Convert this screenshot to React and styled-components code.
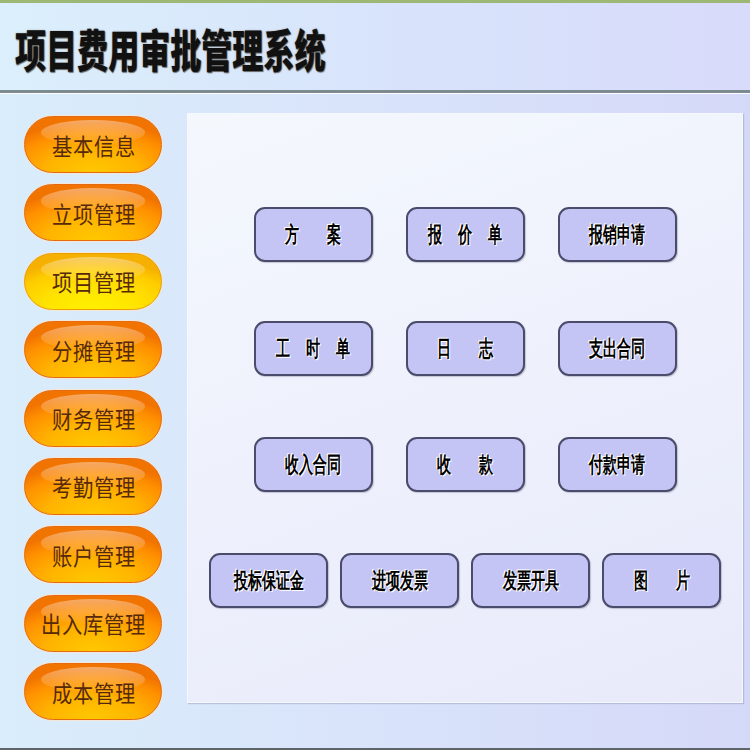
import React from "react";
import styled, { createGlobalStyle, css } from "styled-components";

const GlobalStyle = createGlobalStyle`
  html, body {
    margin: 0;
    padding: 0;
  }
  body {
    font-family: "Noto Sans CJK SC", "Noto Sans", sans-serif;
  }
`;

const Page = styled.div`
  width: 750px;
  height: 750px;
  display: flex;
  flex-direction: column;
  overflow: hidden;
  background: linear-gradient(to right, #d9edfb 0%, #d9e4fa 45%, #d5d9f8 100%);
  border-top: 3px solid #9cb874;
  box-sizing: border-box;
`;

const Header = styled.div`
  height: 90px;
  display: flex;
  align-items: center;
  padding: 4px 0 0 15px;
  box-sizing: border-box;
  background: linear-gradient(to right, #dbeffc 0%, #d8e4fb 50%, #d8dbfa 100%);
  border-bottom: 3px solid #7d8a8f;
  box-shadow: 0 1px 0 #ffffff;
`;

const Title = styled.h1`
  margin: 0;
  display: inline-block;
  font-size: 45px;
  font-weight: 800;
  color: #111;
  white-space: nowrap;
  letter-spacing: 0;
  transform: scaleX(0.69);
  transform-origin: left center;
  text-shadow: 1px 1px 1px #666, 0 0 2px #999;
`;

const Body = styled.div`
  flex: 1;
  display: flex;
  padding: 20px 0 0 24px;
  box-sizing: border-box;
  border-bottom: 2px solid #5e6468;
`;

const Sidebar = styled.nav`
  width: 138px;
  display: flex;
  flex-direction: column;
  gap: 11.4px;
  padding-top: 3px;
`;

const Pill = styled.div`
  position: relative;
  height: 57px;
  border-radius: 29px;
  display: flex;
  align-items: center;
  justify-content: center;
  box-sizing: border-box;
  border: 1px solid #e56a10;
  box-shadow: 0 0 0 1px rgba(255, 230, 200, 0.7);
  background: radial-gradient(
    ellipse 75% 90% at 50% 100%,
    #ffc800 0%,
    #ffb400 45%,
    #ff9000 80%,
    #f27400 100%
  );
  ${(p) =>
    p.$active &&
    css`
      border-color: #eaa000;
      background: radial-gradient(
        ellipse 75% 90% at 50% 100%,
        #fff000 0%,
        #ffe400 45%,
        #ffcc00 80%,
        #f6b000 100%
      );
    `}

  &::before {
    content: "";
    position: absolute;
    top: 3px;
    left: 12%;
    width: 76%;
    height: 46%;
    border-radius: 50%;
    background: linear-gradient(
      to bottom,
      rgba(255, 255, 255, 0.4),
      rgba(255, 255, 255, 0.03)
    );
  }
`;

const PillText = styled.span`
  position: relative;
  display: flex;
  gap: 1px;
  color: #55290a;
  font-size: 23px;
`;

const Char = styled.span`
  display: inline-block;
  width: ${(p) => p.$w}px;
  overflow: visible;
  white-space: nowrap;
  transform: scaleX(${(p) => p.$sx});
  transform-origin: left center;
`;

const Panel = styled.main`
  width: 556px;
  height: 590px;
  margin-left: 25px;
  box-sizing: border-box;
  background: linear-gradient(160deg, #f4f8fd 0%, #eef1fc 50%, #e8eafa 100%);
  border: 1px solid #f6f8ff;
  box-shadow: 1px 1px 1px rgba(120, 130, 170, 0.35);
  display: flex;
  flex-direction: column;
  padding-top: 93px;
`;

const Row = styled.div`
  display: flex;
  justify-content: center;
  gap: ${(p) => p.$gap}px;
  margin-bottom: ${(p) => p.$mb}px;
`;

const ActionButton = styled.button`
  width: 119px;
  height: 55px;
  border-radius: 11px;
  border: 2px solid #4b4b6c;
  background: #c5c5f5;
  display: flex;
  align-items: center;
  justify-content: center;
  padding: 0;
  cursor: pointer;
  box-shadow: 1px 1px 1px rgba(60, 60, 90, 0.25);
`;

const ActionText = styled.span`
  display: flex;
  gap: ${(p) => p.$gap}px;
  color: #000;
  font-size: 22px;
  font-weight: 700;
  text-shadow: 0 0 2px #fff, 1px 1px 0 #fff, -1px -1px 0 #fff;
`;

const menus = [
  "基本信息",
  "立项管理",
  "项目管理",
  "分摊管理",
  "财务管理",
  "考勤管理",
  "账户管理",
  "出入库管理",
  "成本管理",
];

const gapFor = (label) => {
  if (label.length === 2) return 28;
  if (label.length === 3) return 16;
  return 0;
};

const rows = [
  { items: ["方案", "报价单", "报销申请"], gap: 33, mb: 59 },
  { items: ["工时单", "日志", "支出合同"], gap: 33, mb: 61 },
  { items: ["收入合同", "收款", "付款申请"], gap: 33, mb: 61 },
  { items: ["投标保证金", "进项发票", "发票开具", "图片"], gap: 12, mb: 0 },
];

const Action = ({ label }) => (
  <ActionButton>
    <ActionText $gap={gapFor(label)}>
      {label.split("").map((c, i) => (
        <Char key={i} $w={14} $sx={0.64}>
          {c}
        </Char>
      ))}
    </ActionText>
  </ActionButton>
);

export default function App() {
  return (
    <>
      <GlobalStyle />
      <Page>
        <Header>
          <Title>项目费用审批管理系统</Title>
        </Header>
        <Body>
          <Sidebar>
            {menus.map((m) => (
              <Pill key={m} $active={m === "项目管理"}>
                <PillText>
                  {m.split("").map((c, i) => (
                    <Char key={i} $w={20} $sx={0.88}>
                      {c}
                    </Char>
                  ))}
                </PillText>
              </Pill>
            ))}
          </Sidebar>
          <Panel>
            {rows.map((r, i) => (
              <Row key={i} $gap={r.gap} $mb={r.mb}>
                {r.items.map((it) => (
                  <Action key={it} label={it} />
                ))}
              </Row>
            ))}
          </Panel>
        </Body>
      </Page>
    </>
  );
}
